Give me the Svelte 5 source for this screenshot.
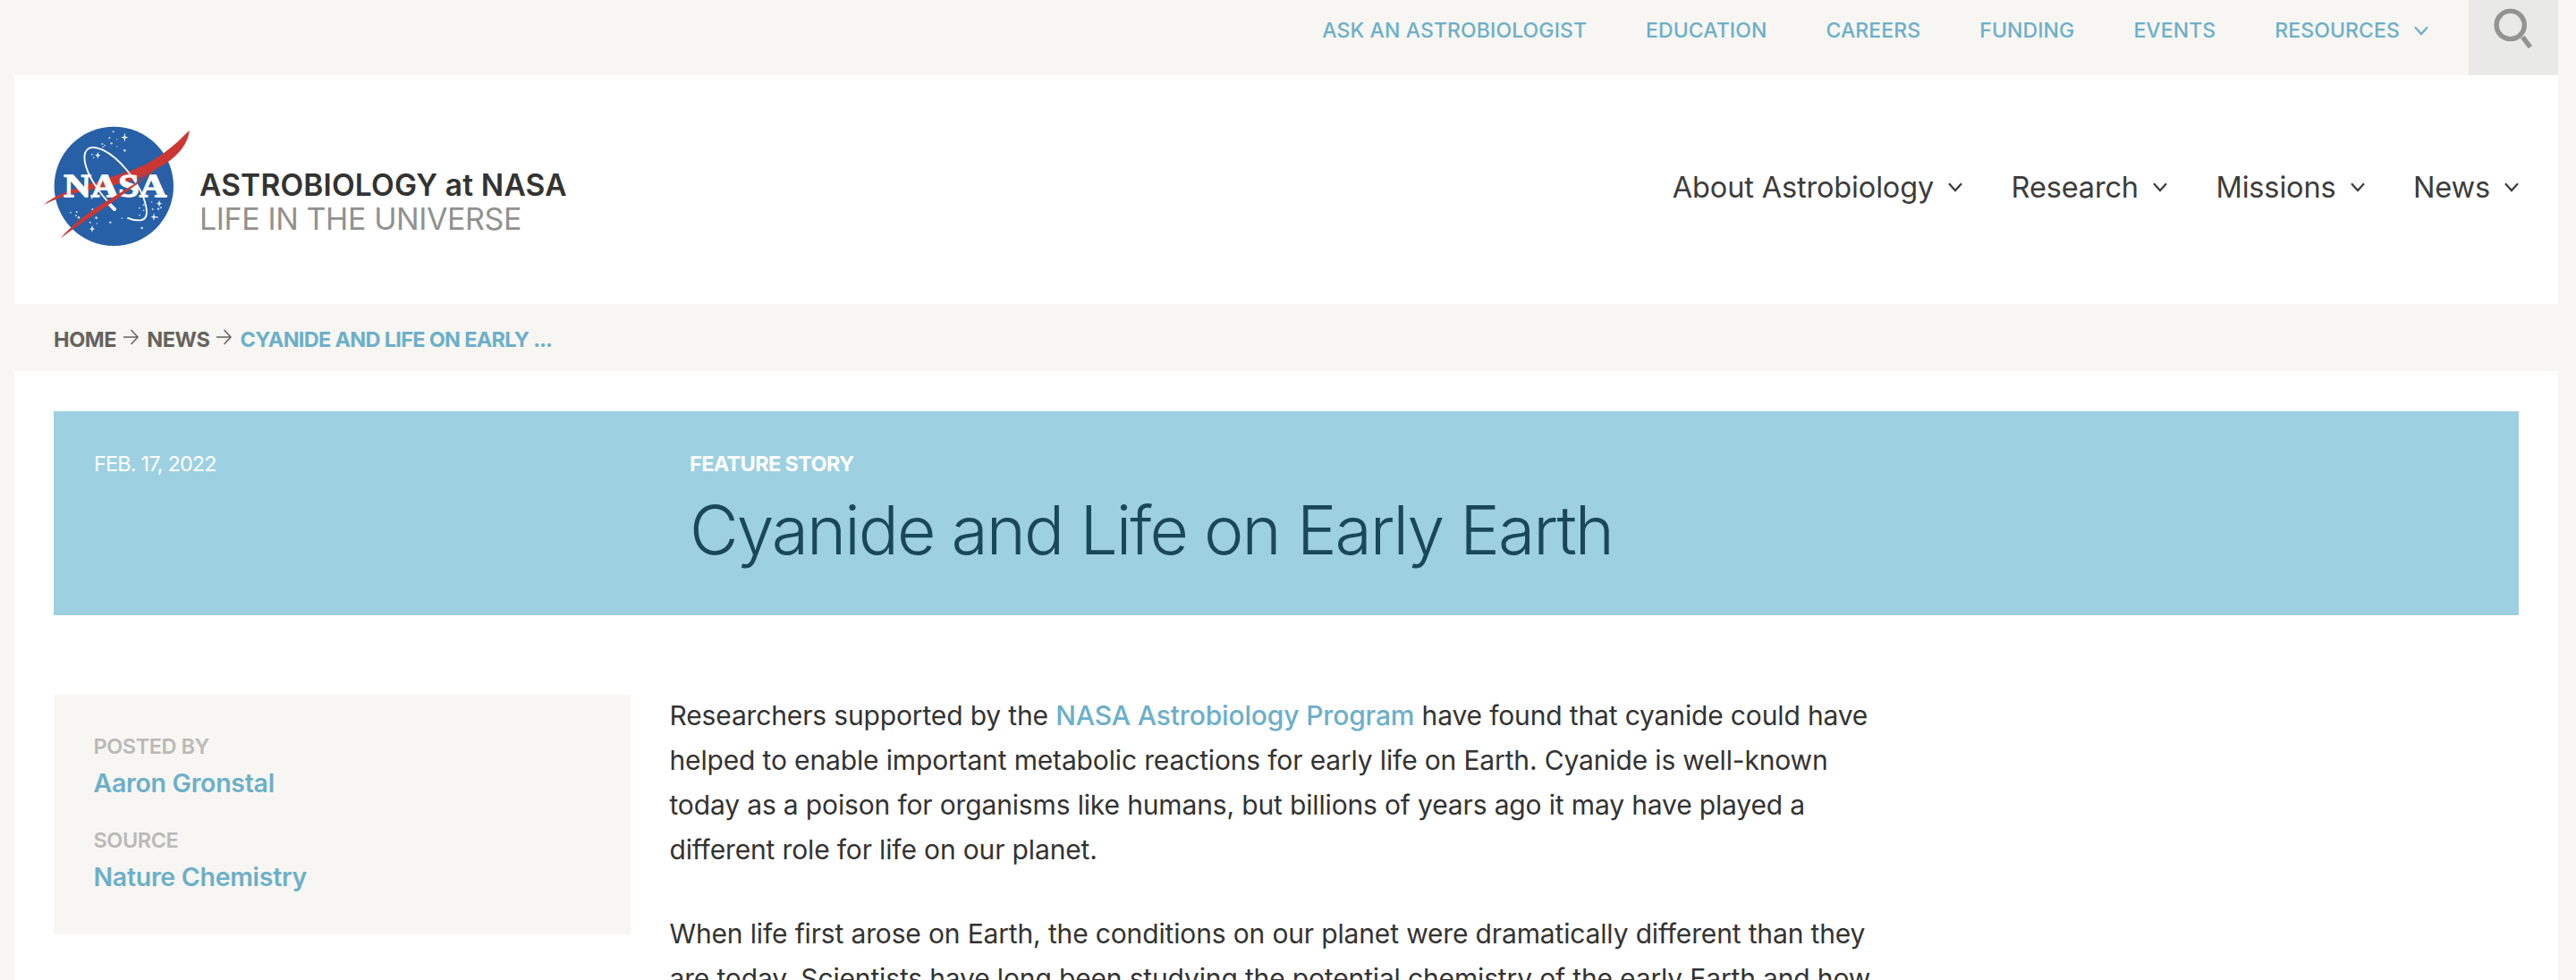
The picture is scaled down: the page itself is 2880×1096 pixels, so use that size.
<script>
    const topLinks = [
        { label: 'Ask an Astrobiologist' },
        { label: 'Education' },
        { label: 'Careers' },
        { label: 'Funding' },
        { label: 'Events' },
        { label: 'Resources', menu: true }
    ];

    const mainLinks = ['About Astrobiology', 'Research', 'Missions', 'News'];

    const meta = [
        { label: 'Posted by', value: 'Aaron Gronstal' },
        { label: 'Source', value: 'Nature Chemistry' }
    ];

    // small dots in the logo: x, y, radius
    const stars = [
        [260, 52, 3], [247, 73, 3], [272, 77, 2], [254, 91, 3.5], [223, 93, 3], [231, 98, 2.5],
        [225, 103, 2.5], [272, 101, 2], [298, 115, 4], [189, 128, 2.5], [194, 139, 2.5],
        [117, 323, 2.5], [137, 321, 3], [135, 333, 3], [144, 340, 4], [190, 312, 3], [203, 341, 4],
        [182, 356, 3], [205, 360, 2.5], [250, 356, 3.5], [289, 342, 2.5], [356, 375, 4],
        [348, 308, 2.5], [348, 332, 2.5], [362, 298, 3], [362, 316, 2.5], [389, 288, 2.5],
        [392, 312, 3], [411, 311, 3.5], [420, 307, 3], [407, 339, 3], [188, 275, 2.5]
    ];

    // four-pointed stars: x, y, half size
    const sparkles = [[298, 71, 16], [208, 131, 12], [189, 378, 13], [396, 338, 13], [414, 293, 12]];
</script>

{#snippet chevron()}
    <svg class="chevron" width="16" height="11" viewBox="0 0 16 11">
        <path d="M1 1.2 8 9 15 1.2" fill="none" stroke="currentColor" stroke-width="2.2" />
    </svg>
{/snippet}

{#snippet arrow()}
    <svg class="arrow" width="17" height="18" viewBox="0 0 17 18">
        <path d="M0 9h16M8.6 1l7.4 8-7.4 8" fill="none" stroke="currentColor" stroke-width="1.5" />
    </svg>
{/snippet}

<div class="page">
    <div class="topbar">
        <nav class="top-nav">
            {#each topLinks as link}
                <a href="#top">{link.label}{#if link.menu}{@render chevron()}{/if}</a>
            {/each}
        </nav>
        <button class="search" aria-label="Search">
            <svg width="44" height="48" viewBox="0 0 44 48">
                <circle cx="18.7" cy="20" r="15.6" fill="none" stroke="#939390" stroke-width="5.4" />
                <path d="M32.3 33.4 40.9 44.6" stroke="#939390" stroke-width="5.4" />
            </svg>
        </button>
    </div>

    <header>
        <a class="brand" href="#top">
            <svg class="logo" width="184" height="160" viewBox="0 0 552 480">
                <circle cx="262" cy="235" r="200" fill="#2760a7" />
                {#each stars as [x, y, r]}
                    <circle cx={x} cy={y} {r} fill="#fff" opacity="0.8" />
                {/each}
                {#each sparkles as [x, y, s]}
                    <path
                        d="M{x} {y - s}L{x + 2.5} {y - 2.5} {x + s * 0.8} {y} {x + 2.5} {y + 2.5} {x} {y + s} {x - 2.5} {y + 2.5} {x - s * 0.8} {y} {x - 2.5} {y - 2.5}Z"
                        fill="#fff"
                    />
                {/each}
                <path
                    d="M515 47C460 104 410 143 345 172C280 198 200 220 130 244C90 257 55 273 27 297C62 279 100 267 140 256C200 243 270 232 330 214C360 205 385 191 410 174C470 142 512 95 515 47Z"
                    fill="#cc3733"
                />
                <text x="94" y="269" textLength="345" lengthAdjust="spacingAndGlyphs">NASA</text>
                <path
                    d="M262 308C215 262 172 200 164 150C158 105 186 95 225 113C280 140 335 210 358 265C378 315 377 345 352 349C338 350 320 347 307 341"
                    fill="none"
                    stroke="#fff"
                    stroke-width="5.5"
                />
                <path d="M245 293 264 312" stroke="#fff" stroke-width="12" stroke-linecap="round" />
                <path d="M410 174C365 204 325 232 285 256C205 304 140 345 82 410C145 362 205 325 275 275C325 240 365 208 410 174Z" fill="#cc3733" />
                <path d="M413 170C380 184 355 196 325 213" fill="none" stroke="#2760a7" stroke-width="1.5" stroke-dasharray="5 3" />
            </svg>
            <span class="brand-text">
                <strong>ASTROBIOLOGY at NASA</strong>
                <span>LIFE IN THE UNIVERSE</span>
            </span>
        </a>
        <nav class="main-nav">
            {#each mainLinks as link}
                <a href="#top">{link}{@render chevron()}</a>
            {/each}
        </nav>
    </header>

    <div class="breadcrumbs">
        <a href="#top">Home</a>
        {@render arrow()}
        <a href="#top">News</a>
        {@render arrow()}
        <span class="current">Cyanide and Life on Early <span class="dots">...</span></span>
    </div>

    <main>
        <section class="hero">
            <div class="date">Feb. 17, 2022</div>
            <div>
                <div class="kind">Feature Story</div>
                <h1>Cyanide and Life on Early Earth</h1>
            </div>
        </section>

        <div class="content">
            <aside>
                {#each meta as item}
                    <dl>
                        <dt>{item.label}</dt>
                        <dd>{item.value}</dd>
                    </dl>
                {/each}
            </aside>
            <article>
                <p>
                    Researchers supported by the <a href="#top">NASA Astrobiology Program</a> have found that cyanide could have<br />
                    helped to enable important metabolic reactions for early life on Earth. Cyanide is well-known<br />
                    today as a poison for organisms like humans, but billions of years ago it may have played a<br />
                    different role for life on our planet.
                </p>
                <p>
                    When life first arose on Earth, the conditions on our planet were dramatically different than they<br />
                    are today. Scientists have long been studying the potential chemistry of the early Earth and how
                </p>
            </article>
        </div>
    </main>
</div>

<style>
    :global(body) {
        background: #f7f6f2;
    }
    .page {
        box-sizing: border-box;
        height: 1096px;
        overflow: hidden;
        padding: 0 20px 0 16px;
        background: #f7f6f2;
        color: #333332;
        font-family: Inter, "Liberation Sans", sans-serif;
        font-size: 30px;
    }
    a {
        color: inherit;
        text-decoration: none;
    }
    .topbar {
        display: flex;
        justify-content: flex-end;
        height: 84px;
    }
    .top-nav {
        display: flex;
        gap: 66px;
        padding: 19px 45px 0 0;
        color: #6cafc9;
        font-size: 23px;
        font-weight: 500;
        line-height: 30px;
        letter-spacing: 0.1px;
        text-transform: uppercase;
    }
    .chevron {
        margin-left: 16px;
    }
    .top-nav .chevron {
        vertical-align: 2px;
    }
    .search {
        width: 100px;
        height: 84px;
        padding: 8px 0 0 28px;
        border: 0;
        background: #e9e9e7;
        text-align: left;
    }
    .search svg {
        display: block;
        margin-bottom: 28px;
    }
    header {
        display: flex;
        justify-content: space-between;
        box-sizing: border-box;
        height: 256px;
        padding: 0 44px 0 24px;
        background: #fff;
    }
    .brand {
        display: flex;
    }
    .logo {
        margin-top: 46px;
    }
    .logo text {
        fill: #fff;
        stroke: #fff;
        stroke-width: 4px;
        font: bold 110px "Liberation Serif", serif;
    }
    .brand-text {
        display: flex;
        flex-direction: column;
        margin: 104px 0 0 -1px;
        line-height: 38px;
        white-space: nowrap;
    }
    .brand-text strong {
        font-size: 33.5px;
        font-weight: 600;
        letter-spacing: 0.15px;
    }
    .brand-text span {
        color: #91918e;
        font-size: 34px;
        letter-spacing: -0.4px;
    }
    .main-nav {
        display: flex;
        gap: 54.5px;
        padding-top: 106px;
        color: #3c3c3b;
        font-size: 32.5px;
        line-height: 40px;
        letter-spacing: -0.15px;
    }
    .main-nav .chevron {
        vertical-align: 6px;
    }
    .breadcrumbs {
        display: flex;
        box-sizing: border-box;
        height: 75px;
        padding: 25px 0 0 44px;
        color: #65625e;
        font-size: 23.5px;
        font-weight: 700;
        line-height: 30px;
        letter-spacing: -0.4px;
        text-transform: uppercase;
    }
    .arrow {
        margin: 3px 9px 0 8px;
    }
    .current {
        color: #6cafc9;
        letter-spacing: -0.7px;
    }
    .dots {
        letter-spacing: -1px;
    }
    main {
        height: 681px;
        padding: 45px 44px 0;
        box-sizing: border-box;
        background: #fff;
    }
    .hero {
        display: grid;
        grid-template-columns: 666px 1fr;
        box-sizing: border-box;
        height: 228px;
        padding: 43.5px 43px 0 45px;
        background: #9dd0e1;
        color: #fff;
        font-size: 23.5px;
        line-height: 30px;
    }
    .date {
        letter-spacing: -0.85px;
        text-transform: uppercase;
    }
    .kind {
        font-weight: 700;
        letter-spacing: -0.65px;
        text-transform: uppercase;
    }
    h1 {
        margin: 14px 0 0;
        color: #1b475a;
        font-size: 75px;
        font-weight: 300;
        line-height: 90px;
        letter-spacing: -1.95px;
    }
    .content {
        display: flex;
        align-items: flex-start;
        gap: 43.5px;
        padding-top: 87px;
    }
    aside {
        flex: none;
        box-sizing: border-box;
        width: 645px;
        height: 268px;
        margin-top: 2px;
        padding: 42.5px 43px 0 44.5px;
        background: #f7f6f2;
    }
    dl {
        margin: 0 0 29px;
    }
    dt {
        color: #bab9b7;
        font-size: 23.5px;
        font-weight: 600;
        line-height: 30px;
        letter-spacing: -0.45px;
        text-transform: uppercase;
    }
    dd {
        margin: 6px 0 0;
        color: #6cafc9;
        font-size: 28.5px;
        font-weight: 600;
        line-height: 40px;
        letter-spacing: -0.28px;
    }
    article {
        line-height: 50px;
        letter-spacing: -0.15px;
        white-space: nowrap;
    }
    article a {
        color: #6cafc9;
        font-weight: 500;
    }
    p {
        margin: 0 0 44px;
    }
</style>
